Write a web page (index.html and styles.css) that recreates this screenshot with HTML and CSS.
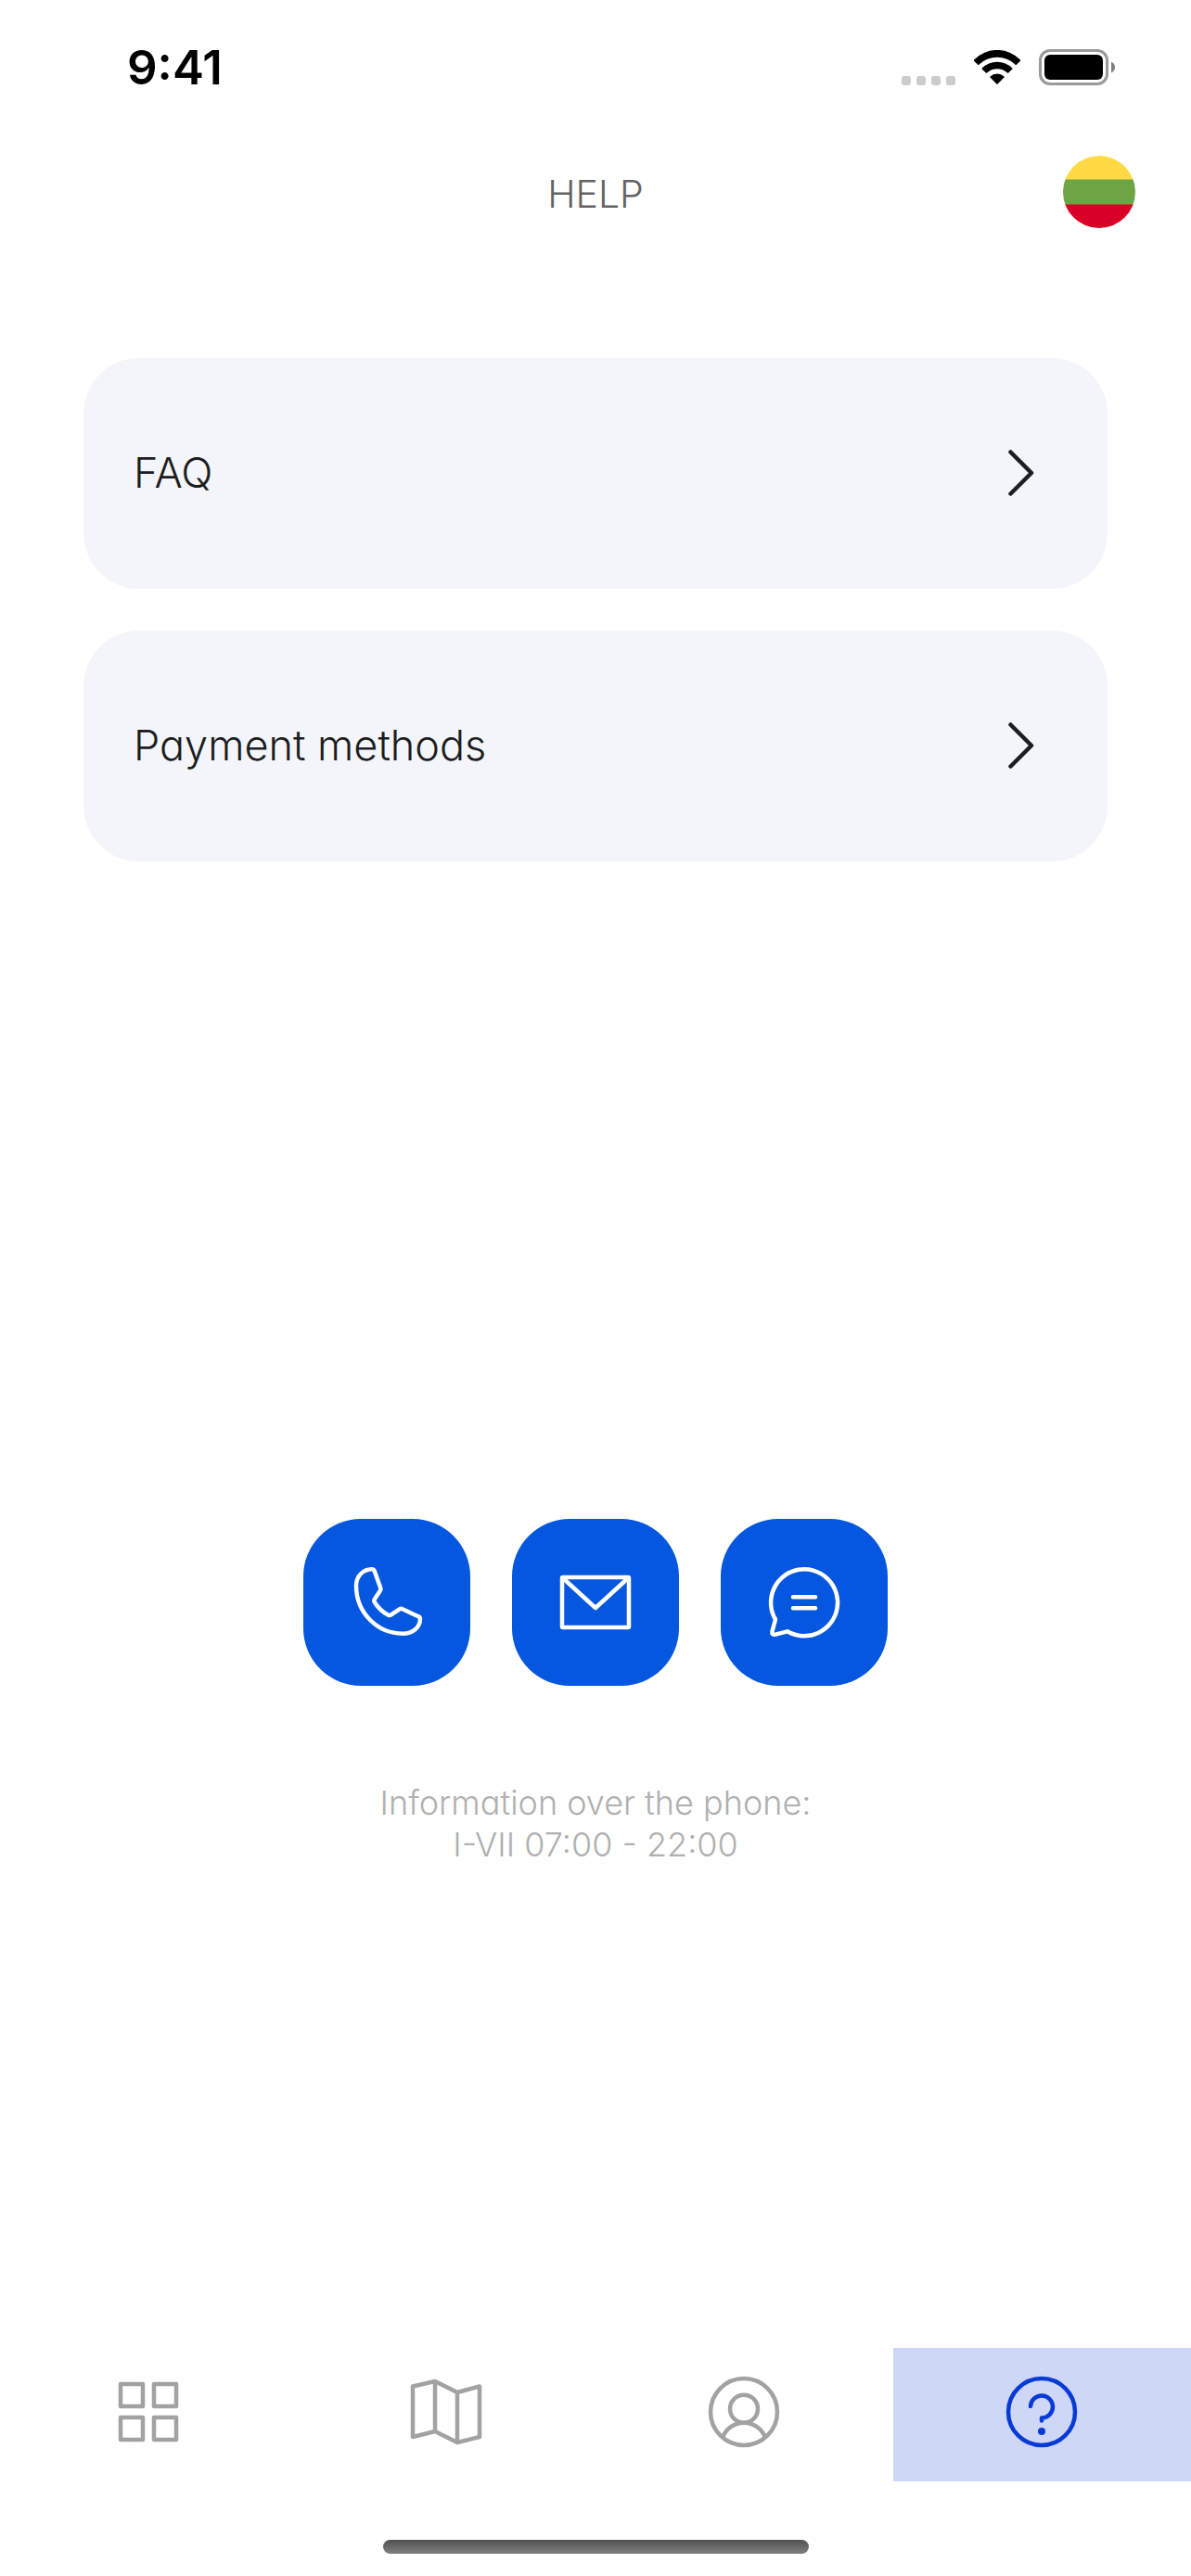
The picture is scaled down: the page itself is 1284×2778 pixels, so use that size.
FILE: index.html
```html
<!DOCTYPE html>
<html lang="en">
<head>
  <meta charset="UTF-8" />
  <title>Help</title>
  <meta name="viewport" content="width=device-width, initial-scale=1.0" />
  <link rel="stylesheet" href="styles.css">
</head>

<body>
  <div class="status-bar">
    <span class="time">9:41</span>
    <div class="status-icons">
      <svg class="signal" viewBox="0 0 58 10" width="58" height="10">
        <rect x="0" width="10" height="10" rx="3" />
        <rect x="16" width="10" height="10" rx="3" />
        <rect x="32" width="10" height="10" rx="3" />
        <rect x="48" width="10" height="10" rx="3" />
      </svg>
      <svg class="wifi" viewBox="0 0 50 38" width="50" height="38">
        <path d="M0 10.6A34.6 34.6 0 0 1 50 10.6Q50.5 11.2 50 11.8L45.8 15.8Q45.2 16.3 44.6 15.8A28 28 0 0 0 5.4 15.8Q4.8 16.3 4.2 15.8L0 11.8Q-.5 11.2 0 10.6Z" />
        <path d="M8.7 19.4A23 23 0 0 1 41.3 19.4Q41.8 20 41.3 20.6L37.2 24.6Q36.6 25.1 36 24.6A16 16 0 0 0 14 24.6Q13.4 25.1 12.8 24.6L8.7 20.6Q8.2 20 8.7 19.4Z" />
        <path d="M17.5 28.4A11 11 0 0 1 32.5 28.4Q33 29 32.5 29.6L25.6 36.6Q25 37.1 24.4 36.6L17.5 29.6Q17 29 17.5 28.4Z" />
      </svg>
      <svg class="battery" viewBox="0 0 82 39" width="82" height="39">
        <rect x="1.5" y="1.5" width="72" height="36" rx="10.5" fill="none" stroke="#9a9a9a" stroke-width="3" />
        <rect x="6" y="6" width="63" height="27" rx="6" />
        <path d="M78 13.5Q82 15.5 82 19.5T78 25.5Z" fill="#808080" />
      </svg>
    </div>
  </div>

  <header class="header">
    <h1>HELP</h1>
    <button type="button" class="language" aria-label="Lietuvių">
      <svg viewBox="0 0 78 78" width="78" height="78">
        <clipPath id="flag"><circle cx="39" cy="39" r="39" /></clipPath>
        <g clip-path="url(#flag)">
          <rect width="78" height="26" fill="#ffda44" />
          <rect y="25.5" width="78" height="27.5" fill="#6da544" />
          <rect y="52.5" width="78" height="26" fill="#d80027" />
        </g>
      </svg>
    </button>
  </header>

  <main>
    <div class="cards">
      <a class="card" href="#faq">
        <span>FAQ</span>
        <svg viewBox="0 0 28 50" width="28" height="50"><path d="M2.5 2.5L25 25L2.5 47.5" /></svg>
      </a>
      <a class="card" href="#payment">
        <span>Payment methods</span>
        <svg viewBox="0 0 28 50" width="28" height="50"><path d="M2.5 2.5L25 25L2.5 47.5" /></svg>
      </a>
    </div>

    <section class="contact">
      <div class="contact-buttons">
        <button type="button" aria-label="Call">
          <svg class="icon" viewBox="0 0 90 90">
            <path d="M28.7 9.3C19 9.6 12 17 12 27C12 55.5 34 78.7 62.3 78.7C73 78.7 80.8 72 81 63Q81 61 79 60.2L62 52.2Q60.3 51.3 58.7 52.4L50 58.2Q48 59.6 46 58.4C40 55 35 50 31.9 45Q30.7 43 32 41.2L37.8 32.6Q39 31 38.2 29.2L31.8 11.5Q31 9.2 28.7 9.3Z" />
          </svg>
        </button>
        <button type="button" aria-label="Email">
          <svg class="icon" viewBox="0 0 90 90">
            <rect x="9" y="18" width="72" height="54" rx="1" />
            <path d="M9.5 18.5L45 51L80.5 18.5" />
          </svg>
        </button>
        <button type="button" aria-label="Chat">
          <svg class="icon" viewBox="0 0 90 90">
            <path d="M14 63.5A36 36 0 1 1 26.8 76.3L14 79.7Q9.6 80.5 10.5 76.3Z" />
            <path d="M33 39.3H57M33 51.3H57" />
          </svg>
        </button>
      </div>
      <p>Information over the phone:<br>I-VII 07:00 - 22:00</p>
    </section>
  </main>

  <nav class="tabs">
    <a href="#services" aria-label="Services">
      <svg class="icon" viewBox="0 0 90 90">
        <rect x="15" y="15" width="24" height="24" />
        <rect x="51" y="15" width="24" height="24" />
        <rect x="15" y="51" width="24" height="24" />
        <rect x="51" y="51" width="24" height="24" />
      </svg>
    </a>
    <a href="#map" aria-label="Map">
      <svg class="icon" viewBox="0 0 90 90">
        <path d="M9 17.5L33 12L57 24L81 17.5V72L57 78L33 66L9 72ZM33 12V66M57 24V78" />
      </svg>
    </a>
    <a href="#profile" aria-label="Profile">
      <svg class="icon" viewBox="0 0 90 90">
        <circle cx="45" cy="45" r="36" />
        <circle cx="45" cy="41.7" r="15" />
        <path d="M22.3 72A24.5 24.5 0 0 1 67.7 72" />
      </svg>
    </a>
    <a class="active" href="#help" aria-label="Help">
      <svg class="icon" viewBox="0 0 90 90">
        <circle cx="45" cy="45" r="36" />
        <path d="M33 39A12 12 0 1 1 45 51.5V54.5" />
        <circle class="dot" cx="45" cy="66" r="4" />
      </svg>
    </a>
  </nav>
  <div class="home-bar"></div>
</body>
</html>
```

FILE: styles.css
```css
* {
  box-sizing: border-box;
}

body {
  margin: 0;
  min-height: 100vh;
  display: flex;
  flex-direction: column;
  background: #fff;
  color: #1c1d20;
  font-family: Inter, sans-serif;
  font-weight: 300;
  font-feature-settings: "cv11";
}

svg {
  display: block;
}

a {
  color: inherit;
  text-decoration: none;
}

button {
  padding: 0;
  border: none;
  background: none;
  color: inherit;
  cursor: pointer;
}

.status-bar {
  display: flex;
  justify-content: space-between;
  align-items: center;
  height: 144px;
  padding: 0 82px 0 137px;
}

.time {
  color: #000;
  font-size: 51px;
  font-weight: 600;
}

.status-icons {
  display: flex;
  align-items: flex-end;
  gap: 20px;
}

.signal {
  fill: #ccc;
}

.header {
  display: grid;
  grid-template-columns: 1fr auto 1fr;
  align-items: center;
  height: 126px;
  padding: 0 60px;
}

.header h1 {
  grid-column: 2;
  margin: 0;
  padding-top: 4px;
  color: #636363;
  font-size: 41px;
  font-weight: 300;
}

.language {
  justify-self: end;
}

main {
  flex: 1;
  display: flex;
  flex-direction: column;
  justify-content: space-between;
  padding: 116px 90px 520px;
}

.cards {
  display: flex;
  flex-direction: column;
  gap: 45px;
}

.card {
  display: flex;
  justify-content: space-between;
  align-items: center;
  height: 249px;
  padding: 0 79px 2px 54px;
  border-radius: 60px;
  background: #f3f5fa;
  font-size: 45px;
}

.card svg {
  fill: none;
  stroke: currentColor;
  stroke-width: 4.5;
  stroke-linecap: round;
  stroke-linejoin: round;
}

.icon {
  width: 90px;
  height: 90px;
  fill: none;
  stroke: currentColor;
  stroke-width: 4.5;
  stroke-linecap: round;
  stroke-linejoin: round;
}

.contact-buttons {
  display: flex;
  justify-content: center;
  gap: 45px;
}

.contact-buttons button {
  display: flex;
  justify-content: center;
  align-items: center;
  width: 180px;
  height: 180px;
  border-radius: 62px;
  background: #0457de;
  color: #fff;
}

.contact p {
  margin: 104px 0 0;
  color: #b0b0b0;
  font-size: 36px;
  line-height: 45px;
  text-align: center;
}

.tabs {
  display: grid;
  grid-template-columns: repeat(4, 1fr);
  height: 144px;
  color: #a2a2a2;
}

.tabs a {
  display: flex;
  justify-content: center;
  padding: 24px 1px 0 0;
}

.tabs .active {
  background: #ced7f6;
  color: #083bd6;
}

.dot {
  fill: currentColor;
  stroke: none;
}

.home-bar {
  width: 459px;
  height: 15px;
  margin: 63px auto 24px;
  border-radius: 8px;
  background: linear-gradient(#505050, #808080);
}
```
